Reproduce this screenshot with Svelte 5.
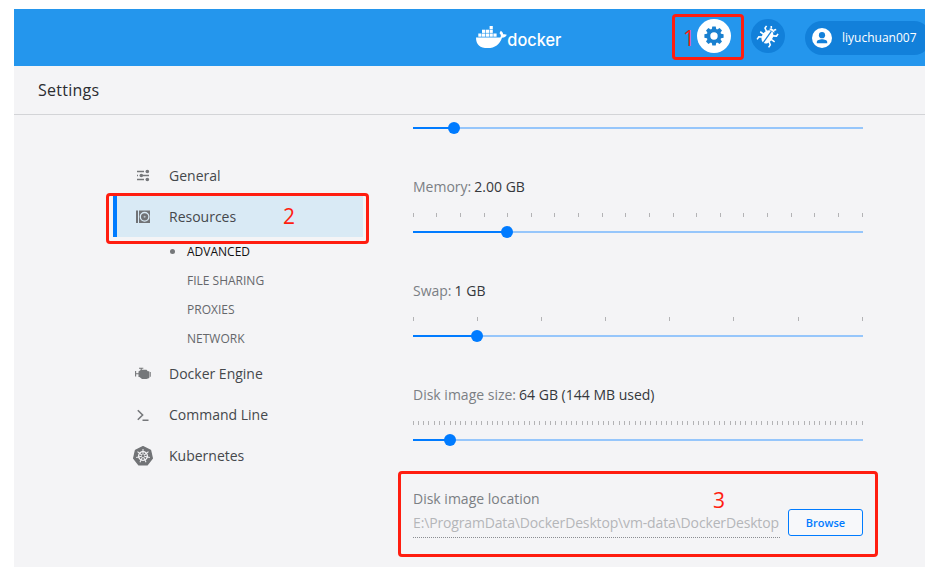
<script>
  const subItems = ['ADVANCED', 'FILE SHARING', 'PROXIES', 'NETWORK'];
  const sliders = [
    { label: 'Memory:', value: '2.00 GB', ticks: 20, pos: 94 },
    { label: 'Swap:', value: '1 GB', ticks: 8, pos: 64 },
    { label: 'Disk image size:', value: '64 GB (144 MB used)', ticks: 86, pos: 37 }
  ];
  const tickX = (i, n) => Math.max(0, Math.round((i * 449) / (n - 1) - 0.35));
  const teeth = [0, 45, 90, 135, 180, 225, 270, 315];
  const spokes = [0, 51.4, 102.9, 154.3, 205.7, 257.1, 308.6];
</script>

{#snippet slider(pos)}
  <div class="slider">
    <div class="fill" style="width: {pos}px"></div>
    <div class="thumb" style="left: {pos - 6}px"></div>
  </div>
{/snippet}

<div class="app">
  <header>
    <svg class="brand" width="90" height="30" viewBox="0 0 90 30">
      <g fill="#fff">
        <path d="M1 12.4H25.2C26.4 11.4 26 9.5 24.5 8.3C25 7 25.4 6.3 25.9 5.7C27.5 6.9 28.1 8.2 28.2 9.3C29.7 8.9 31.1 9.3 31.8 9.8C31 11.8 29.3 12.7 27 12.7C24.5 19.5 20.2 23 12.7 23C5 23 1 19.6 1 12.4Z" />
        <rect x="3.3" y="8.5" width="3.2" height="3.2" /><rect x="7" y="8.5" width="3.2" height="3.2" /><rect x="10.8" y="8.5" width="3.2" height="3.2" /><rect x="14.6" y="8.5" width="3.2" height="3.2" /><rect x="18.4" y="8.5" width="3.2" height="3.2" />
        <rect x="7" y="4.7" width="3.2" height="3.2" /><rect x="10.8" y="4.7" width="3.2" height="3.2" /><rect x="14.6" y="4.7" width="3.2" height="3.2" /><rect x="14.6" y="1" width="3.2" height="3.2" />
      </g>
      <text x="32.3" y="20.5" textLength="54" lengthAdjust="spacingAndGlyphs">docker</text>
    </svg>
    <div class="actions">
      <div class="round white">
        <svg width="20" height="20" viewBox="-10 -10 20 20">
          <g fill="#1a80cf">
            {#each teeth as a}<path d="M-2.4 -6L-1.7 -9.6H1.7L2.4 -6Z" transform="rotate({a})" />{/each}
          </g>
          <circle r="5.5" fill="none" stroke="#1a80cf" stroke-width="3.6" />
        </svg>
      </div>
      <div class="round">
        <svg width="24" height="24" viewBox="-12 -12 24 24">
          <g transform="rotate(35)">
            <path d="M-3.2 -6.3C-2.5 -9 2.5 -9 3.2 -6.3Z" fill="#fff" />
            <ellipse cy="1" rx="5.3" ry="7.2" fill="#fff" />
            <path d="M0 -6V8.5" stroke="#1280da" stroke-width="1.2" />
            <path d="M-4 -3L-7 -4.8V-7.5M4 -3L7 -4.8V-7.5M-4.5 1H-8.8M4.5 1H8.8M-4 4L-7 6V9M4 4L7 6V9M-1.5 -8L-3 -10M1.5 -8L3 -10" fill="none" stroke="#fff" stroke-width="1.6" />
          </g>
        </svg>
      </div>
      <div class="user">
        <svg width="20" height="20" viewBox="0 0 20 20">
          <circle cx="10" cy="10" r="10" fill="#fff" />
          <circle cx="10" cy="7.2" r="3.1" fill="#1280da" />
          <path d="M4.8 15.3V14C4.8 12.2 7.6 11.3 10 11.3S15.2 12.2 15.2 14V15.3Z" fill="#1280da" />
        </svg>
        <span>liyuchuan007</span>
      </div>
    </div>
  </header>

  <div class="title">Settings</div>

  <div class="body">
    <nav>
      <div class="item">
        <svg width="20" height="20" viewBox="0 0 20 20">
          <path d="M4 5.5H11M13 5.5H16M4 9.5H5M8.5 9.5H16M4 13.5H11M13 13.5H16" stroke="#75777a" stroke-width="1.3" />
          <g fill="#75777a"><circle cx="14.3" cy="5.5" r="1.8" /><circle cx="8.3" cy="9.5" r="1.8" /><circle cx="14.3" cy="13.5" r="1.8" /></g>
        </svg>
        <span>General</span>
      </div>
      <div class="item active">
        <svg width="20" height="20" viewBox="0 0 20 20">
          <path d="M3 3.5H5V16H3ZM6 3.5H17V16H6Z" fill="#717376" />
          <circle cx="11.6" cy="9.8" r="4.3" fill="none" stroke="#d9eaf5" stroke-width="1.3" />
          <circle cx="11.6" cy="9.8" r="1" fill="#b6c2ca" />
        </svg>
        <span>Resources</span>
      </div>
      <div class="subs">
        {#each subItems as s, i}
          <div class="sub" class:current={i === 0}>{s}</div>
        {/each}
      </div>
      <div class="item">
        <svg width="20" height="20" viewBox="0 0 20 20">
          <path d="M5.5 7.5L8 5.8H13.5L14.8 7.2H16.3V14L13.5 15H9L6.5 13H5.5Z" fill="#75777a" />
          <path d="M2.6 7V12.5M3 9.8H6M17.2 8V12.8M6 4.3H10.3M8.2 4.3V6" fill="none" stroke="#75777a" stroke-width="1.1" />
        </svg>
        <span>Docker Engine</span>
      </div>
      <div class="item">
        <svg width="20" height="20" viewBox="0 0 20 20">
          <path d="M4.8 5.2L9.6 10L4.8 14.8M9.5 15.3H15.5" fill="none" stroke="#75777a" stroke-width="1.6" />
        </svg>
        <span>Command Line</span>
      </div>
      <div class="item">
        <svg width="20" height="20" viewBox="-10 -10 20 20">
          <path d="M0 -9.3L7.5 -5.7L9.3 2.3L4.2 8.8H-4.2L-9.3 2.3L-7.5 -5.7Z" fill="#717376" stroke="#717376" stroke-width="1.4" stroke-linejoin="round" />
          <circle r="4.4" fill="none" stroke="#f4f4f6" stroke-width="1.3" />
          <g stroke="#f4f4f6" stroke-width="1">
            {#each spokes as a}<path d="M0 -1.2V-7" transform="rotate({a})" />{/each}
          </g>
        </svg>
        <span>Kubernetes</span>
      </div>
    </nav>

    <main>
      <div class="setting">{@render slider(41)}</div>
      {#each sliders as s}
        <div class="setting">
          <div class="label">{s.label} <b>{s.value}</b></div>
          <svg class="ticks" width="450" height="4">
            {#each Array(s.ticks) as _, i}<rect x={tickX(i, s.ticks)} width="1" height="4" fill="#b3b3b5" />{/each}
          </svg>
          {@render slider(s.pos)}
        </div>
      {/each}
      <div class="label">Disk image location</div>
      <div class="location">
        <div class="path">E:\ProgramData\DockerDesktop\vm-data\DockerDesktop</div>
        <button>Browse</button>
      </div>
    </main>
  </div>

  <div class="mark one"><span>1</span></div>
  <div class="mark two"><span>2</span></div>
  <div class="mark three"><span>3</span></div>
</div>

<style>
  :global(body) { background: #fff; overflow: hidden; }
  .app {
    position: relative;
    box-sizing: border-box;
    width: 925px;
    height: 567px;
    padding: 9px 0 0 14px;
    overflow: hidden;
    font: 14px/20px 'Open Sans', 'Noto Sans', sans-serif;
    color: #45484c;
  }
  svg { display: block; flex: none; }
  header {
    display: flex;
    justify-content: space-between;
    height: 57px;
    background: #2496ed;
  }
  .brand { margin: 16px 0 0 461px; }
  .brand text { font: 500 17.5px Inter, 'Open Sans', sans-serif; fill: #fff; }
  .actions { display: flex; width: 228px; flex: none; padding-top: 10px; overflow: hidden; }
  .round {
    display: flex;
    align-items: center;
    justify-content: center;
    flex: none;
    width: 34px;
    height: 34px;
    margin-right: 20px;
    border-radius: 50%;
    background: #1280da;
  }
  .round.white { background: #fff; }
  .user {
    display: flex;
    align-items: center;
    flex: none;
    width: 126px;
    height: 34px;
    margin-top: 2px;
    box-sizing: border-box;
    padding-left: 7px;
    gap: 10px;
    border-radius: 17px;
    background: #1280da;
    color: #fff;
    font-size: 12px;
    font-weight: 500;
  }
  .title {
    height: 48px;
    padding-left: 24px;
    border-bottom: 1px solid #d3d4d7;
    background: #f4f4f6;
    font-size: 16px;
    line-height: 48px;
    letter-spacing: 0.25px;
    color: #2b2d30;
  }
  .body { display: flex; height: 452px; background: #f4f4f6; }
  nav { width: 250px; padding: 40px 0 0 99px; }
  .item {
    display: flex;
    align-items: center;
    height: 41px;
    box-sizing: border-box;
    padding-left: 20px;
    gap: 16px;
  }
  .active { border-left: 4px solid #007bff; padding-left: 16px; background: #d9eaf5; }
  .sub {
    position: relative;
    height: 29px;
    padding-left: 74px;
    font-size: 12px;
    line-height: 29px;
    color: #65676b;
  }
  .current { color: #111; }
  .current::before {
    content: '';
    position: absolute;
    left: 57px;
    top: 12px;
    width: 5px;
    height: 5px;
    border-radius: 50%;
    background: #75777a;
  }
  main { width: 450px; padding: 7px 0 0 50px; }
  .setting { margin-bottom: 43px; }
  .label { color: #7b7f84; }
  .label b { margin-left: -0.6px; font-weight: 400; color: #35383c; }
  .ticks { margin: 16px 0 9px; }
  .slider {
    position: relative;
    height: 12px;
    background: linear-gradient(#96c6fb, #96c6fb) 0 5px / 450px 2px no-repeat;
  }
  .fill { position: absolute; top: 5px; height: 2px; background: #007bff; }
  .thumb { position: absolute; top: 0; width: 12px; height: 12px; border-radius: 50%; background: #007bff; }
  .location { display: flex; justify-content: space-between; }
  .path {
    width: 367px;
    height: 28px;
    border-bottom: 1px dotted #8b8e92;
    line-height: 28px;
    letter-spacing: -0.15px;
    white-space: nowrap;
    color: #b4b6b9;
  }
  button {
    width: 75px;
    height: 27px;
    padding: 0;
    border: 1px solid #007bff;
    border-radius: 3px;
    background: #f7f8fa;
    color: #007bff;
    font: 600 11px 'Open Sans', sans-serif;
  }
  .mark {
    position: absolute;
    box-sizing: border-box;
    border: 3px solid #ff1d10;
    border-radius: 4px;
    color: #ff1d10;
    font-size: 21px;
    line-height: 24px;
  }
  .mark span { position: absolute; }
  .one { left: 672px; top: 14px; width: 72px; height: 46px; }
  .one span { left: 8px; top: 9px; }
  .two { left: 106px; top: 193px; width: 263px; height: 51px; }
  .two span { left: 174px; top: 8px; }
  .three { left: 398px; top: 471px; width: 480px; height: 86px; }
  .three span { left: 312px; top: 14px; }
</style>
